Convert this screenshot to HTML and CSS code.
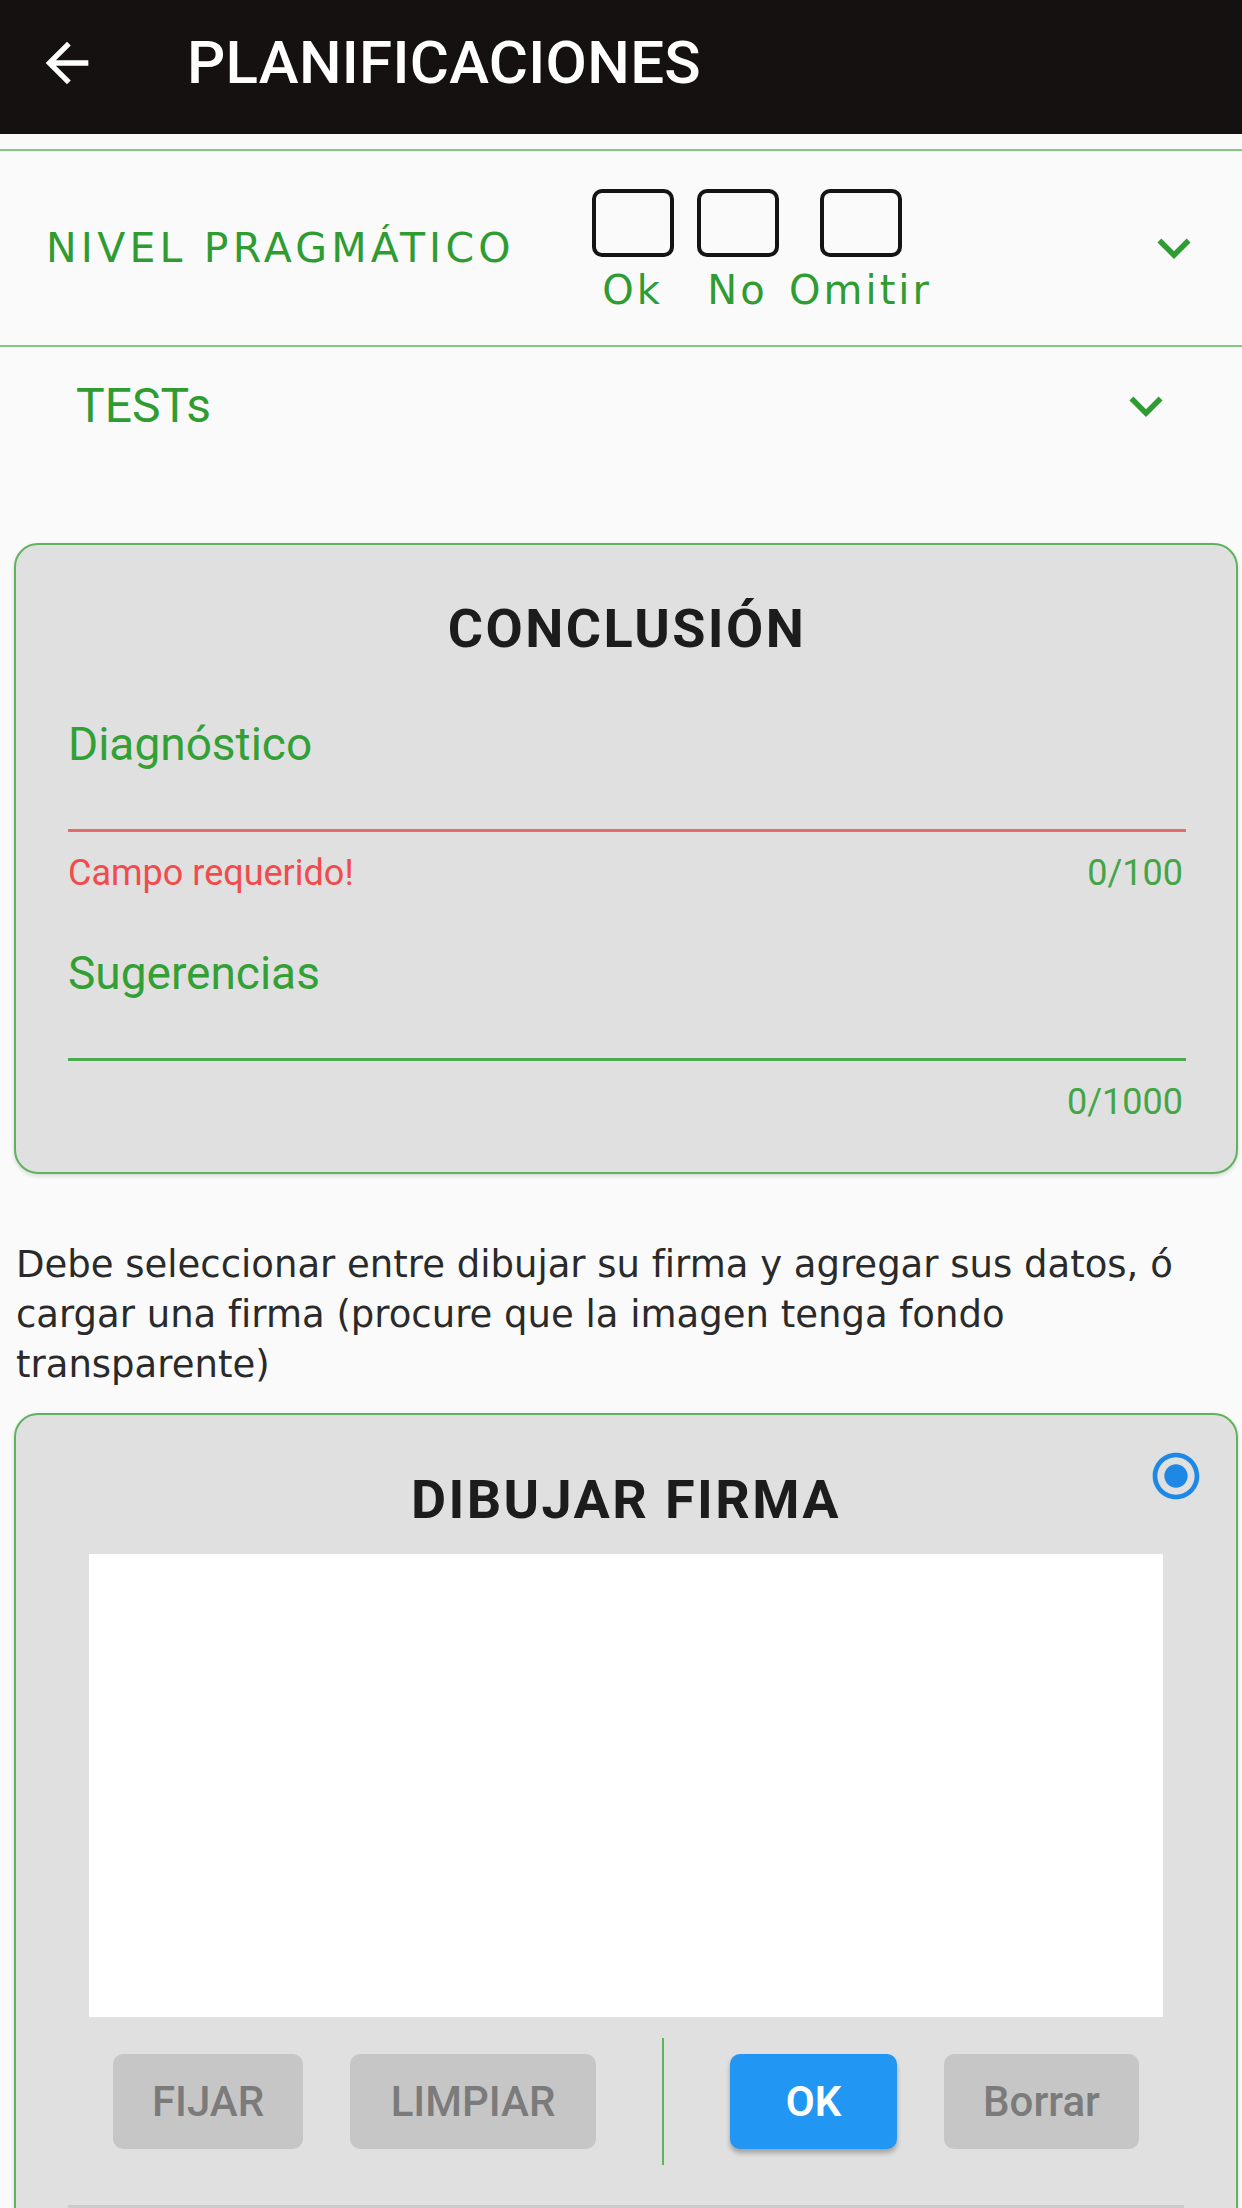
FILE: index.html
```html
<!DOCTYPE html>
<html lang="es">
<head>
<meta charset="utf-8">
<title>Planificaciones</title>
<link rel="stylesheet" href="styles.css">
</head>
<body>
<header class="appbar">
  <div class="toolbar">
    <svg class="back" viewBox="0 0 24 24" aria-hidden="true"><path d="M20 11H7.83l5.59-5.59L12 4l-8 8 8 8 1.41-1.41L7.83 13H20v-2z"/></svg>
    <h1 class="title">PLANIFICACIONES</h1>
  </div>
</header>
<main>
  <section class="level-row">
    <span class="level-title">NIVEL PRAGMÁTICO</span>
    <div class="checks">
      <div class="check"><span class="box"></span><span class="check-label">Ok</span></div>
      <div class="check"><span class="box"></span><span class="check-label">No</span></div>
      <div class="check check-wide"><span class="box"></span><span class="check-label">Omitir</span></div>
    </div>
    <svg class="chev" viewBox="0 0 24 24" aria-hidden="true"><path d="M16.59 8.59L12 13.17 7.41 8.59 6 10l6 6 6-6z"/></svg>
  </section>
  <section class="tests-row">
    <span class="tests-title">TESTs</span>
    <svg class="chev" viewBox="0 0 24 24" aria-hidden="true"><path d="M16.59 8.59L12 13.17 7.41 8.59 6 10l6 6 6-6z"/></svg>
  </section>

  <section class="card conclusion">
    <h2 class="card-title">CONCLUSIÓN</h2>
    <div class="field field-error"><span class="field-label">Diagnóstico</span></div>
    <div class="helper"><span class="error">Campo requerido!</span><span class="count">0/100</span></div>
    <div class="field field-second"><span class="field-label">Sugerencias</span></div>
    <div class="helper"><span></span><span class="count">0/1000</span></div>
  </section>

  <p class="note">Debe seleccionar entre dibujar su firma y agregar sus datos, ó cargar una firma (procure que la imagen tenga fondo transparente)</p>

  <section class="card signature">
    <svg class="radio" viewBox="0 0 24 24" aria-hidden="true"><path d="M12 7c-2.76 0-5 2.24-5 5s2.24 5 5 5 5-2.24 5-5-2.24-5-5-5zm0-5C6.48 2 2 6.48 2 12s4.480 10 10 10 10-4.48 10-10S17.52 2 12 2zm0 18c-4.420 0-8-3.58-8-8s3.58-8 8-8 8 3.58 8 8-3.58 8-8 8z"/></svg>
    <h2 class="card-title">DIBUJAR FIRMA</h2>
    <div class="pad"></div>
    <div class="actions">
      <div class="btn-group">
        <button class="btn btn-disabled btn-fijar">FIJAR</button>
        <button class="btn btn-disabled btn-limpiar">LIMPIAR</button>
      </div>
      <span class="divider"></span>
      <div class="btn-group">
        <button class="btn btn-primary">OK</button>
        <button class="btn btn-disabled btn-borrar">Borrar</button>
      </div>
    </div>
    <div class="next-line"></div>
  </section>
</main>
</body>
</html>
```

FILE: styles.css
```css
html, body {
  margin: 0;
  padding: 0;
}
body {
  width: 1242px;
  height: 2208px;
  overflow: hidden;
  background: #fafafa;
  font-family: Roboto, "Liberation Sans", sans-serif;
  color: #222;
}

/* App bar */
.appbar {
  height: 134px;
  background: #151111;
}
.toolbar {
  height: 126px;
  display: flex;
  align-items: center;
  padding-left: 35px;
}
.back {
  width: 64px;
  height: 64px;
  fill: #ffffff;
  flex: 0 0 auto;
}
.title {
  margin: 0 0 0 88px;
  font-size: 60px;
  line-height: 60px;
  font-weight: 500;
  color: #ffffff;
  letter-spacing: 0.3px;
}

/* Expansion rows */
.level-row {
  margin-top: 15px;
  height: 194px;
  border-top: 2px solid #86c986;
  border-bottom: 2px solid #86c986;
  display: flex;
  align-items: center;
  padding: 0 35px 0 46px;
}
.level-title {
  flex: 0 0 534px;
  font-family: "DejaVu Sans", Verdana, sans-serif;
  font-size: 41px;
  line-height: 41px;
  color: #2f9c32;
  letter-spacing: 4.2px;
}
.checks {
  display: flex;
  margin-top: 4px;
}
.check {
  width: 105px;
  display: flex;
  flex-direction: column;
  align-items: center;
}
.check-wide {
  width: 141px;
}
.box {
  width: 82px;
  height: 68px;
  box-sizing: border-box;
  border: 4px solid #141414;
  border-radius: 10px;
}
.check-label {
  margin-top: 13px;
  font-family: "DejaVu Sans", Verdana, sans-serif;
  font-size: 40px;
  line-height: 41px;
  color: #2f9c32;
  letter-spacing: 3px;
  white-space: nowrap;
}
.chev {
  margin-left: auto;
  width: 66px;
  height: 66px;
  fill: #2f9c32;
  flex: 0 0 auto;
}
.tests-row {
  height: 118px;
  display: flex;
  align-items: center;
  padding: 0 63px 0 76px;
}
.tests-title {
  font-size: 48px;
  line-height: 48px;
  color: #2f9c32;
}

/* Cards */
.card {
  position: relative;
  margin: 0 4px 0 14px;
  border: 2px solid #5fb35f;
  border-radius: 24px;
  background: #e0e0e0;
  box-shadow: 0 2px 4px rgba(0, 0, 0, 0.14);
}
.conclusion {
  margin-top: 78px;
  padding: 57px 50px 52px 52px;
}
.card-title {
  margin: 0;
  text-align: center;
  font-size: 54px;
  line-height: 54px;
  font-weight: 700;
  color: #1c1c1c;
  letter-spacing: 2.4px;
}
.field {
  margin-top: 65px;
  padding-bottom: 62px;
  border-bottom: 3px solid #4ea84e;
}
.field-error {
  border-bottom-color: #e06c6c;
}
.field-second {
  margin-top: 59px;
}
.field-label {
  display: block;
  font-size: 46px;
  line-height: 46px;
  color: #33a036;
}
.helper {
  margin-top: 23px;
  display: flex;
  justify-content: space-between;
  font-size: 36px;
  line-height: 36px;
  padding-right: 3px;
}
.error {
  color: #f24b4b;
}
.count {
  color: #45a545;
}

/* Note */
.note {
  margin: 66px 0 0;
  padding: 0 16px;
  font-family: "DejaVu Sans", Verdana, sans-serif;
  font-size: 37px;
  line-height: 50px;
  color: #2a2a2a;
}

/* Signature card */
.signature {
  margin-top: 23px;
  padding: 58px 0 60px;
}
.radio {
  position: absolute;
  top: 33px;
  right: 32px;
  width: 56px;
  height: 56px;
  fill: #1e88e5;
}
.pad {
  margin: 27px 73px 0;
  height: 463px;
  background: #ffffff;
}
.actions {
  margin-top: 21px;
  height: 127px;
  padding: 0 97px;
  display: flex;
  align-items: center;
}
.btn-group {
  display: flex;
  gap: 47px;
}
.divider {
  width: 2px;
  height: 127px;
  margin: 0 66px;
  background: #5fb35f;
}
.btn {
  height: 95px;
  padding: 0;
  border: none;
  border-radius: 10px;
  font-family: Roboto, "Liberation Sans", sans-serif;
  font-size: 42px;
  font-weight: 500;
}
.btn-disabled {
  background: #c6c6c6;
  color: #7b7b7b;
}
.btn-fijar {
  width: 190px;
}
.btn-limpiar {
  width: 246px;
}
.btn-borrar {
  width: 195px;
}
.btn-primary {
  width: 167px;
  background: #2196f3;
  color: #ffffff;
  font-weight: 600;
  box-shadow: 0 4px 5px rgba(0, 0, 0, 0.28);
}
.next-line {
  margin: 40px 52px 0;
  height: 3px;
  background: #cbcbcb;
}
```
